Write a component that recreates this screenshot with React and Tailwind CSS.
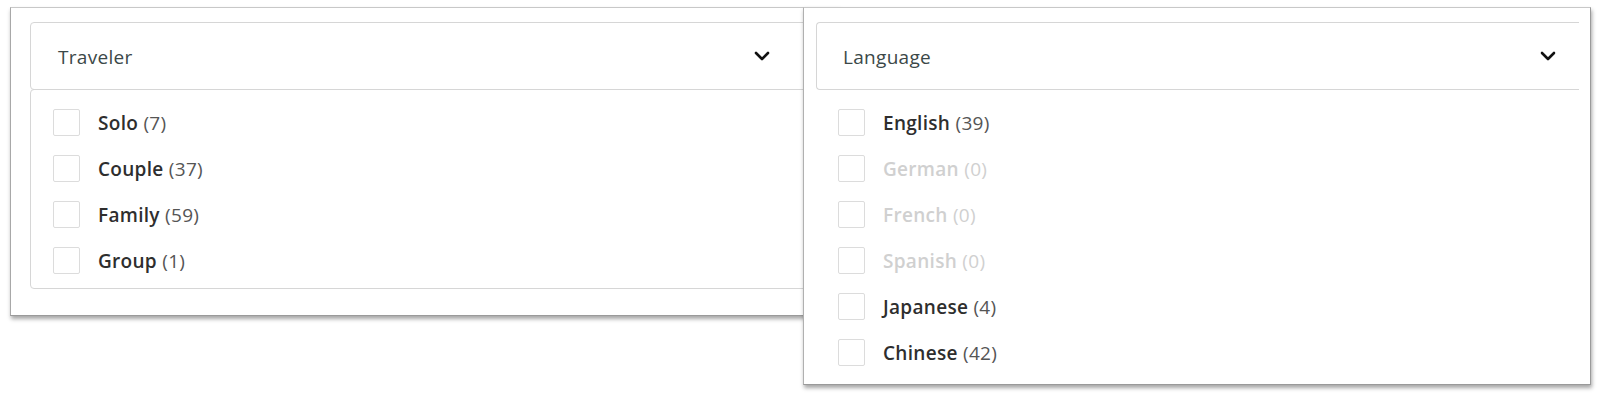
import React from "react";

const font = { fontFamily: "'Open Sans', 'Noto Sans', sans-serif" };

function Chevron() {
  return (
    <svg width="16" height="10" viewBox="0 0 16 10" className="shrink-0">
      <path d="M2 2 L8 8 L14 2" fill="none" stroke="#111" strokeWidth="2.6" strokeLinecap="round" strokeLinejoin="round" />
    </svg>
  );
}

function Row({ label, count, disabled }) {
  return (
    <div className="flex h-[46px] items-center">
      <div className="h-[27px] w-[27px] shrink-0 rounded-[2px] border border-[#dcdcdc] bg-white" />
      <div className={"ml-[18px] mt-[3px] text-[19px] leading-none tracking-[0.3px] " + (disabled ? "text-[#d0d0d0]" : "text-[#2e2e2e]")}>
        <span className="font-semibold">{label}</span>{" "}
        <span className={disabled ? "text-[#d0d0d0]" : "text-[#555]"}>({count})</span>
      </div>
    </div>
  );
}

export default function App() {
  const travelers = [
    ["Solo", 7],
    ["Couple", 37],
    ["Family", 59],
    ["Group", 1],
  ];
  const langs = [
    ["English", 39, false],
    ["German", 0, true],
    ["French", 0, true],
    ["Spanish", 0, true],
    ["Japanese", 4, false],
    ["Chinese", 42, false],
  ];
  return (
    <div className="flex h-[398px] w-[1600px] items-start bg-white pl-[10px] pt-[7px]" style={font}>
      {/* left panel */}
      <div className="h-[309px] w-[830px] shrink-0 border border-[#c8c8c8] border-b-[#9a9a9a] border-l-[#a8a8a8] bg-white pl-[19px] pt-[14px] shadow-[1px_3px_4px_rgba(0,0,0,0.35)]">
        <div className="flex h-[68px] items-center justify-between rounded-[4px] border border-[#d6d6d6] pl-[27px] pr-[68px]">
          <span className="mt-[3px] text-[19px] tracking-[0.3px] text-[#3b4848]">Traveler</span>
          <Chevron />
        </div>
        <div className="-mt-px h-[200px] rounded-[4px] border border-[#d6d6d6] pl-[22px] pt-[9px]">
          {travelers.map(([l, c]) => (
            <Row key={l} label={l} count={c} />
          ))}
        </div>
      </div>
      {/* right panel */}
      <div className="relative z-10 -ml-[37px] h-[378px] w-[788px] shrink-0 border border-[#c8c8c8] border-b-[#9a9a9a] border-l-[#b0b0b0] border-r-[#9a9a9a] bg-white pl-[12px] pr-[11px] pt-[14px] shadow-[1px_3px_4px_rgba(0,0,0,0.35)]">
        <div className="flex h-[68px] items-center justify-between rounded-l-[4px] border-b border-l border-t border-[#d6d6d6] pl-[26px] pr-[23px]">
          <span className="mt-[3px] text-[19px] tracking-[0.3px] text-[#3b4848]">Language</span>
          <Chevron />
        </div>
        <div className="pl-[22px] pt-[9px]">
          {langs.map(([l, c, d]) => (
            <Row key={l} label={l} count={c} disabled={d} />
          ))}
        </div>
      </div>
    </div>
  );
}
